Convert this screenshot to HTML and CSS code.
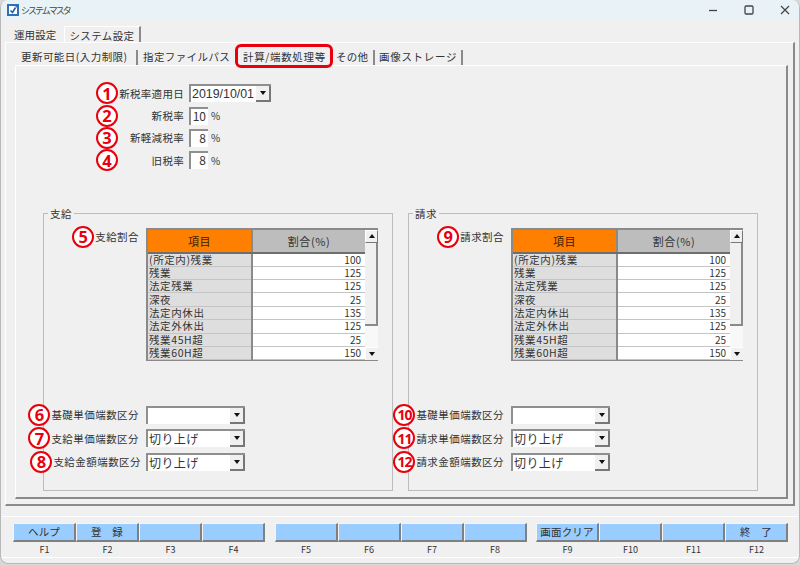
FILE: index.html
```html
<!DOCTYPE html>
<html lang="ja">
<head>
<meta charset="utf-8">
<title>システムマスタ</title>
<link rel="stylesheet" href="styles.css">
</head>
<body>
<div class="window">
  <header class="titlebar">
    <svg class="appicon" width="12" height="12" viewBox="0 0 12 12"><rect x="0" y="0" width="12" height="12" fill="#2f6fb5"/><path d="M2 2h6l2 2v6H2z" fill="#fff"/><path d="M3.5 6.5l2 2 3-5" fill="none" stroke="#1f5fa8" stroke-width="1.6"/></svg>
    <span class="title">システムマスタ</span>
    <div class="controls">
      <svg width="10" height="10" viewBox="0 0 10 10"><path d="M1 5.5h8" stroke="#444" stroke-width="1.3"/></svg>
      <svg width="10" height="10" viewBox="0 0 10 10"><rect x="1" y="1" width="8" height="8" rx="1.2" fill="none" stroke="#444" stroke-width="1.3"/></svg>
      <svg width="10" height="10" viewBox="0 0 10 10"><path d="M1 1l8 8M9 1l-8 8" stroke="#444" stroke-width="1.2"/></svg>
    </div>
  </header>

  <nav class="tabs">
    <span class="tab tab-plain">運用設定</span>
    <span class="tab tab-current">システム設定</span>
  </nav>

  <section class="outer">
    <nav class="subtabs">
      <span class="sub sub-1">更新可能日(入力制限)</span>
      <span class="sub sub-2">指定ファイルパス</span>
      <span class="sub sub-3">計算/端数処理等</span>
      <span class="sub sub-4">その他</span>
      <span class="sub sub-5">画像ストレージ</span>
    </nav>

    <div class="inner">
      <div class="taxform">
        <span class="badge">1</span><span class="lbl">新税率適用日</span>
        <div class="field">
          <div class="select select-date"><span class="sel-text date-text">2019/10/01</span><span class="sel-btn"><i class="arrow-down"></i></span></div>
        </div>
        <span class="badge">2</span><span class="lbl">新税率</span>
        <div class="field"><span class="num">10</span><span class="pct">%</span></div>
        <span class="badge">3</span><span class="lbl">新軽減税率</span>
        <div class="field"><span class="num">8</span><span class="pct">%</span></div>
        <span class="badge">4</span><span class="lbl">旧税率</span>
        <div class="field"><span class="num">8</span><span class="pct">%</span></div>
      </div>

      <div class="groups">
        <fieldset class="group">
          <legend>支給</legend>
          <div class="gridrow">
            <div class="flabel flabel-top"><span class="badge">5</span><span class="lbl">支給割合</span></div>
            <div class="grid">
              <table>
                <thead><tr><th class="th-item">項目</th><th class="th-rate">割合(%)</th></tr></thead>
                <tbody>
                  <tr><td>(所定内)残業</td><td>100</td></tr>
                  <tr><td>残業</td><td>125</td></tr>
                  <tr><td>法定残業</td><td>125</td></tr>
                  <tr><td>深夜</td><td>25</td></tr>
                  <tr><td>法定内休出</td><td>135</td></tr>
                  <tr><td>法定外休出</td><td>125</td></tr>
                  <tr><td>残業45H超</td><td>25</td></tr>
                  <tr><td>残業60H超</td><td>150</td></tr>
                </tbody>
              </table>
              <div class="scroll"><span class="sb-btn"><i class="arrow-up"></i></span><span class="sb-thumb"></span><span class="sb-track"></span><span class="sb-btn sb-btn-end"><i class="arrow-down"></i></span></div>
            </div>
          </div>
          <div class="selects">
            <div class="frow"><div class="flabel"><span class="badge">6</span><span class="lbl">基礎単価端数区分</span></div><div class="select"><span class="sel-text"></span><span class="sel-btn"><i class="arrow-down"></i></span></div></div>
            <div class="frow"><div class="flabel"><span class="badge">7</span><span class="lbl">支給単価端数区分</span></div><div class="select"><span class="sel-text">切り上げ</span><span class="sel-btn"><i class="arrow-down"></i></span></div></div>
            <div class="frow"><div class="flabel flabel-shift"><span class="badge">8</span><span class="lbl">支給金額端数区分</span></div><div class="select"><span class="sel-text">切り上げ</span><span class="sel-btn"><i class="arrow-down"></i></span></div></div>
          </div>
        </fieldset>

        <fieldset class="group">
          <legend>請求</legend>
          <div class="gridrow">
            <div class="flabel flabel-top"><span class="badge">9</span><span class="lbl">請求割合</span></div>
            <div class="grid">
              <table>
                <thead><tr><th class="th-item">項目</th><th class="th-rate">割合(%)</th></tr></thead>
                <tbody>
                  <tr><td>(所定内)残業</td><td>100</td></tr>
                  <tr><td>残業</td><td>125</td></tr>
                  <tr><td>法定残業</td><td>125</td></tr>
                  <tr><td>深夜</td><td>25</td></tr>
                  <tr><td>法定内休出</td><td>135</td></tr>
                  <tr><td>法定外休出</td><td>125</td></tr>
                  <tr><td>残業45H超</td><td>25</td></tr>
                  <tr><td>残業60H超</td><td>150</td></tr>
                </tbody>
              </table>
              <div class="scroll"><span class="sb-btn"><i class="arrow-up"></i></span><span class="sb-thumb"></span><span class="sb-track"></span><span class="sb-btn sb-btn-end"><i class="arrow-down"></i></span></div>
            </div>
          </div>
          <div class="selects">
            <div class="frow"><div class="flabel"><span class="badge badge-wide">10</span><span class="lbl">基礎単価端数区分</span></div><div class="select"><span class="sel-text"></span><span class="sel-btn"><i class="arrow-down"></i></span></div></div>
            <div class="frow"><div class="flabel"><span class="badge badge-wide">11</span><span class="lbl">請求単価端数区分</span></div><div class="select"><span class="sel-text">切り上げ</span><span class="sel-btn"><i class="arrow-down"></i></span></div></div>
            <div class="frow"><div class="flabel"><span class="badge badge-wide">12</span><span class="lbl">請求金額端数区分</span></div><div class="select"><span class="sel-text">切り上げ</span><span class="sel-btn"><i class="arrow-down"></i></span></div></div>
          </div>
        </fieldset>
      </div>
    </div>
  </section>

  <footer class="fnbar">
    <div class="fngroup">
      <div class="fn"><button class="fnbtn">ヘルプ</button><span class="fnkey">F1</span></div>
      <div class="fn"><button class="fnbtn">登　録</button><span class="fnkey">F2</span></div>
      <div class="fn"><button class="fnbtn"></button><span class="fnkey">F3</span></div>
      <div class="fn"><button class="fnbtn"></button><span class="fnkey">F4</span></div>
    </div>
    <div class="fngroup">
      <div class="fn"><button class="fnbtn"></button><span class="fnkey">F5</span></div>
      <div class="fn"><button class="fnbtn"></button><span class="fnkey">F6</span></div>
      <div class="fn"><button class="fnbtn"></button><span class="fnkey">F7</span></div>
      <div class="fn"><button class="fnbtn"></button><span class="fnkey">F8</span></div>
    </div>
    <div class="fngroup">
      <div class="fn"><button class="fnbtn">画面クリア</button><span class="fnkey">F9</span></div>
      <div class="fn"><button class="fnbtn"></button><span class="fnkey">F10</span></div>
      <div class="fn"><button class="fnbtn"></button><span class="fnkey">F11</span></div>
      <div class="fn"><button class="fnbtn">終　了</button><span class="fnkey">F12</span></div>
    </div>
  </footer>
</div>
</body>
</html>
```
FILE: styles.css
```css
* { box-sizing: border-box; }
html, body { margin: 0; padding: 0; }
body {
  width: 800px;
  height: 565px;
  overflow: hidden;
  background: #d9d9d9;
  font-family: "Noto Sans CJK JP", "Liberation Sans", sans-serif;
  font-size: 10px;
  color: #333;
}
.window {
  width: 800px;
  height: 564px;
  background: #f0f0f0;
  border: 1px solid #b8b8b8;
  border-top: 0;
  border-radius: 8px;
  display: flex;
  flex-direction: column;
  overflow: hidden;
}

/* title bar */
.titlebar {
  height: 20px;
  flex: none;
  background: #e9f3f7;
  display: flex;
  align-items: center;
  padding-left: 6px;
}
.title { margin-left: 2px; font-size: 9px; letter-spacing: -2px; color: #444; }
.controls { margin-left: auto; display: flex; gap: 26px; padding-right: 9px; }

/* top tabs */
.tabs {
  height: 23px;
  flex: none;
  padding: 6px 0 0 4px;
  display: flex;
}
.tab { font-size: 10.5px; line-height: 14px; height: 17px; padding-top: 2px; white-space: nowrap; }
.tab-plain { padding-left: 9px; padding-right: 8px; letter-spacing: .1px; }
.tab-current {
  padding: 2px 0 0 4px;
  border-right: 2px solid #8a8a8a;
  border-left: 1px solid #fff;
  border-top: 1px solid #fff;
  width: 77px;
  letter-spacing: .4px;
}

/* outer panel */
.outer {
  height: 464px;
  flex: none;
  margin: -1px 4px 0 4px;
  border-top: 1px solid #fff;
  border-left: 1px solid #fff;
  border-right: 2px solid #8a8a8a;
  border-bottom: 2px solid #8a8a8a;
  display: flex;
  flex-direction: column;
}
.subtabs {
  height: 22px;
  flex: none;
  padding: 7px 0 0 15px;
  display: flex;
}
.sub { font-size: 10.5px; line-height: 14px; height: 15px; white-space: nowrap; }
.sub-1 { width: 117px; border-right: 2px solid #8a8a8a; letter-spacing: .45px; }
.sub-2 { width: 96px; padding-left: 5px; letter-spacing: .4px; }
.sub-3 { width: 99px; padding-left: 9px; letter-spacing: .65px; position: relative; }
.sub-3::after {
  content: "";
  position: absolute;
  left: 1px;
  top: -6px;
  width: 92px;
  height: 18px;
  border: 3px solid #e8000d;
  border-radius: 6px;
}
.sub-4 { width: 42px; border-right: 2px solid #8a8a8a; padding-left: 3px; letter-spacing: .2px; }
.sub-5 { width: 88px; border-right: 2px solid #8a8a8a; padding-left: 4px; letter-spacing: .7px; }

/* inner panel */
.inner {
  flex: 1;
  margin: 0 5px 5px 9px;
  border-top: 1px solid #fff;
  border-left: 1px solid #fff;
  border-right: 2px solid #8a8a8a;
  border-bottom: 2px solid #8a8a8a;
  padding: 16px 0 0 27px;
}
.taxform {
  margin-left: 53px;
  display: grid;
  grid-template-columns: 22px 66px auto;
  grid-auto-rows: 22.4px;
  align-items: center;
}
.field { display: flex; align-items: center; margin-left: 5px; }
.lbl { text-align: right; font-size: 10.5px; letter-spacing: .3px; white-space: nowrap; }
.badge {
  width: 22px;
  height: 22px;
  flex: none;
  border: 2.5px solid #e8000d;
  border-radius: 50%;
  background: #fff;
  color: #e8000d;
  font-family: "Open Sans", "Liberation Sans", sans-serif;
  font-weight: 700;
  font-size: 16.5px;
  line-height: 17px;
  text-align: center;
  display: flex;
  align-items: center;
  justify-content: center;
  position: relative;
  z-index: 1;
}
.badge-wide { font-size: 14px; letter-spacing: -1px; }
.num {
  width: 19px;
  height: 18px;
  background: #fff;
  border-top: 2px solid #8f8f8f;
  border-left: 2px solid #8f8f8f;
  text-align: right;
  font-size: 12px;
  line-height: 14px;
  padding-right: 2px;
}
.pct { margin-left: 3px; font-size: 10px; }

/* selects */
.select {
  width: 99px;
  height: 18px;
  flex: none;
  background: #fff;
  border-top: 2px solid #8f8f8f;
  border-left: 2px solid #8f8f8f;
  display: flex;
}
.select-date { width: 82px; }
.sel-text { flex: 1; font-size: 12px; line-height: 15px; padding-left: 1px; letter-spacing: .4px; white-space: nowrap; }
.date-text { font-family: "Liberation Sans", sans-serif; letter-spacing: 0; line-height: 16px; font-size: 12.4px; }
.sel-btn {
  width: 15px;
  flex: none;
  background: #f0f0f0;
  border-right: 2px solid #777;
  border-bottom: 2px solid #777;
  display: flex;
  align-items: center;
  justify-content: center;
}
.arrow-down, .arrow-up { width: 0; height: 0; border-left: 3.5px solid transparent; border-right: 3.5px solid transparent; }
.arrow-down { border-top: 4px solid #111; }
.arrow-up { border-bottom: 4px solid #111; }

/* groups */
.groups { display: flex; gap: 15px; margin-top: 36px; }
.group {
  width: 350px;
  height: 283px;
  margin: 0;
  padding: 0;
  min-width: 0;
  border: 1px solid #bcbcbc;
}
.group legend { margin-left: 4px; padding: 0 2px; font-size: 10.5px; line-height: 12px; letter-spacing: .5px; }
.gridrow { display: flex; margin-top: 8px; }
.flabel {
  width: 102px;
  height: 18px;
  flex: none;
  display: flex;
  justify-content: flex-end;
  align-items: center;
  gap: 1px;
  padding-right: 7px;
}
.flabel-top { align-items: flex-start; }
.flabel-top .badge { margin-top: -2px; }
.flabel-top .lbl { margin-top: 1px; }
.flabel .lbl { letter-spacing: .45px; }
.flabel-shift { padding-right: 5px; }

/* data grid */
.grid {
  width: 232px;
  height: 133px;
  flex: none;
  display: flex;
  border: 2px solid #8a8a8a;
  border-right: 0;
  border-bottom: 1px solid #8a8a8a;
  background: #fff;
}
.grid table { border-collapse: collapse; width: 217px; height: 130px; table-layout: fixed; }
.grid th, .grid td { padding: 0; font-weight: 400; }
.grid th { height: 23px; font-size: 11px; letter-spacing: .6px; border-bottom: 2px solid #6e6e6e; }
.th-item { width: 104px; background: #ff8000; color: #3a2000; border-right: 2px solid #8a8a8a; }
.th-rate { background: #bdbdbd; }
.grid td { height: 13.4px; line-height: 11px; padding-bottom: 1px; font-size: 10.5px; border-bottom: 1px solid #c4c4c4; white-space: nowrap; overflow: hidden; letter-spacing: .6px; }
.grid td:first-child { background: #dedede; border-right: 2px solid #8a8a8a; padding-left: 1px; }
.grid td:last-child { text-align: right; padding-right: 4px; font-size: 10px; letter-spacing: 0; }
.scroll { width: 13px; flex: none; display: flex; flex-direction: column; background: #f6f6f6; }
.sb-btn { height: 13px; flex: none; background: #f0f0f0; border-right: 1px solid #777; border-bottom: 1px solid #777; border-top: 1px solid #fff; border-left: 1px solid #fff; display: flex; align-items: center; justify-content: center; }
.sb-btn-end { border-bottom: 0; border-right: 0; }
.sb-thumb { height: 83px; flex: none; background: #f0f0f0; border-right: 2px solid #8a8a8a; border-bottom: 2px solid #8a8a8a; }
.sb-track { flex: 1; background: #f8f8f8; }

/* select rows */
.selects { margin-top: 45px; display: flex; flex-direction: column; gap: 5.6px; }
.frow { display: flex; align-items: center; height: 18px; }

/* function bar */
.fnbar {
  height: 42px;
  flex: none;
  margin: 10px 1px 0 1px;
  border-top: 1px solid #fff;
  border-bottom: 1px solid #fff;
  padding: 6px 0 0 11px;
  display: flex;
  gap: 9.5px;
}
.fngroup { display: flex; }
.fn { width: 63px; display: flex; flex-direction: column; align-items: center; }
.fnbtn {
  width: 63px;
  height: 20px;
  margin: 0;
  padding: 0;
  background: #99ccff;
  border: 0;
  border-top: 1px solid #f4f4f4;
  border-left: 1px solid #f4f4f4;
  border-right: 2px solid #808080;
  border-bottom: 2px solid #808080;
  font-family: inherit;
  font-size: 10.5px;
  line-height: 14px;
  color: #333;
  letter-spacing: .2px;
}
.fnkey { font-size: 9px; line-height: 14px; margin-top: 1px; }
```
